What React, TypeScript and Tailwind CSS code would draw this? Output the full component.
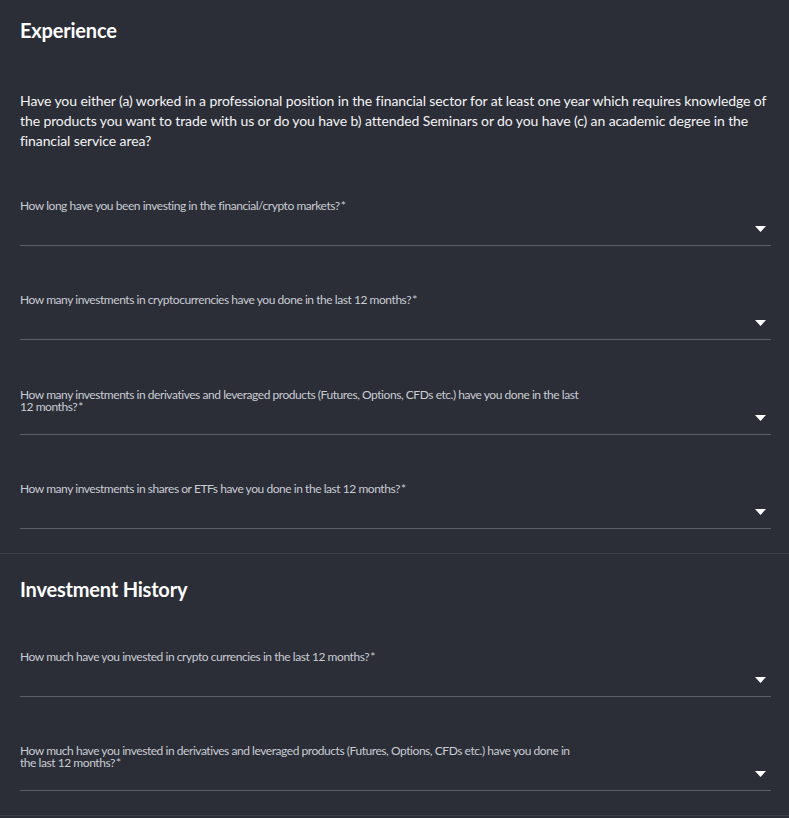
import React from "react";

type Field = { label: string };

const experienceFields: Field[] = [
  { label: "How long have you been investing in the financial/crypto markets?" },
  { label: "How many investments in cryptocurrencies have you done in the last 12 months?" },
  {
    label:
      "How many investments in derivatives and leveraged products (Futures, Options, CFDs etc.) have you done in the last 12 months?",
  },
  { label: "How many investments in shares or ETFs have you done in the last 12 months?" },
];

const historyFields: Field[] = [
  { label: "How much have you invested in crypto currencies in the last 12 months?" },
  {
    label:
      "How much have you invested in derivatives and leveraged products (Futures, Options, CFDs etc.) have you done in the last 12 months?",
  },
];

const ArrowDrop = () => (
  <svg width="11" height="6" viewBox="0 0 11 6" aria-hidden="true" className="absolute right-[5px] bottom-[13px]">
    <path d="M0 0h11L5.5 6z" fill="#ffffff" />
  </svg>
);

const SelectField = ({ label, tight }: Field & { tight?: boolean }) => (
  <div className={`relative h-[46px] border-b border-[#5a5e66] ${tight ? "mt-12" : "mt-[48.5px]"}`}>
    <div className="max-w-[566px] text-[12px] leading-[12px] text-[#c9ccd3] tracking-[-0.45px]">
      {label}
      <span>{"\u2009*"}</span>
    </div>
    <ArrowDrop />
  </div>
);

export default function App() {
  return (
    <div className="min-h-[818px] bg-[#2b2e37] text-white" style={{ fontFamily: "Lato, 'Open Sans', sans-serif" }}>
      <section className="pl-5 pr-[18px] pt-4 pb-6 border-b border-[#3d4149]">
        <h2 className="text-xl leading-7 font-bold text-white tracking-[-0.2px]">Experience</h2>
        <p className="mt-[47px] text-[14px] leading-5 font-normal text-[#f4f4f4] tracking-[-0.1px]">
          Have you either (a) worked in a professional position in the financial sector for at least one year which
          requires knowledge of the products you want to trade with us or do you have b) attended Seminars or do you
          have (c) an academic degree in the financial service area?
        </p>
        {experienceFields.map((f) => (
          <SelectField key={f.label} label={f.label} />
        ))}
      </section>
      <section className="pl-5 pr-[18px] pt-[21px] pb-6 border-b border-[#3d4149]">
        <h2 className="text-xl leading-7 font-bold text-white tracking-[-0.2px]">Investment History</h2>
        {historyFields.map((f) => (
          <SelectField key={f.label} label={f.label} tight />
        ))}
      </section>
    </div>
  );
}
